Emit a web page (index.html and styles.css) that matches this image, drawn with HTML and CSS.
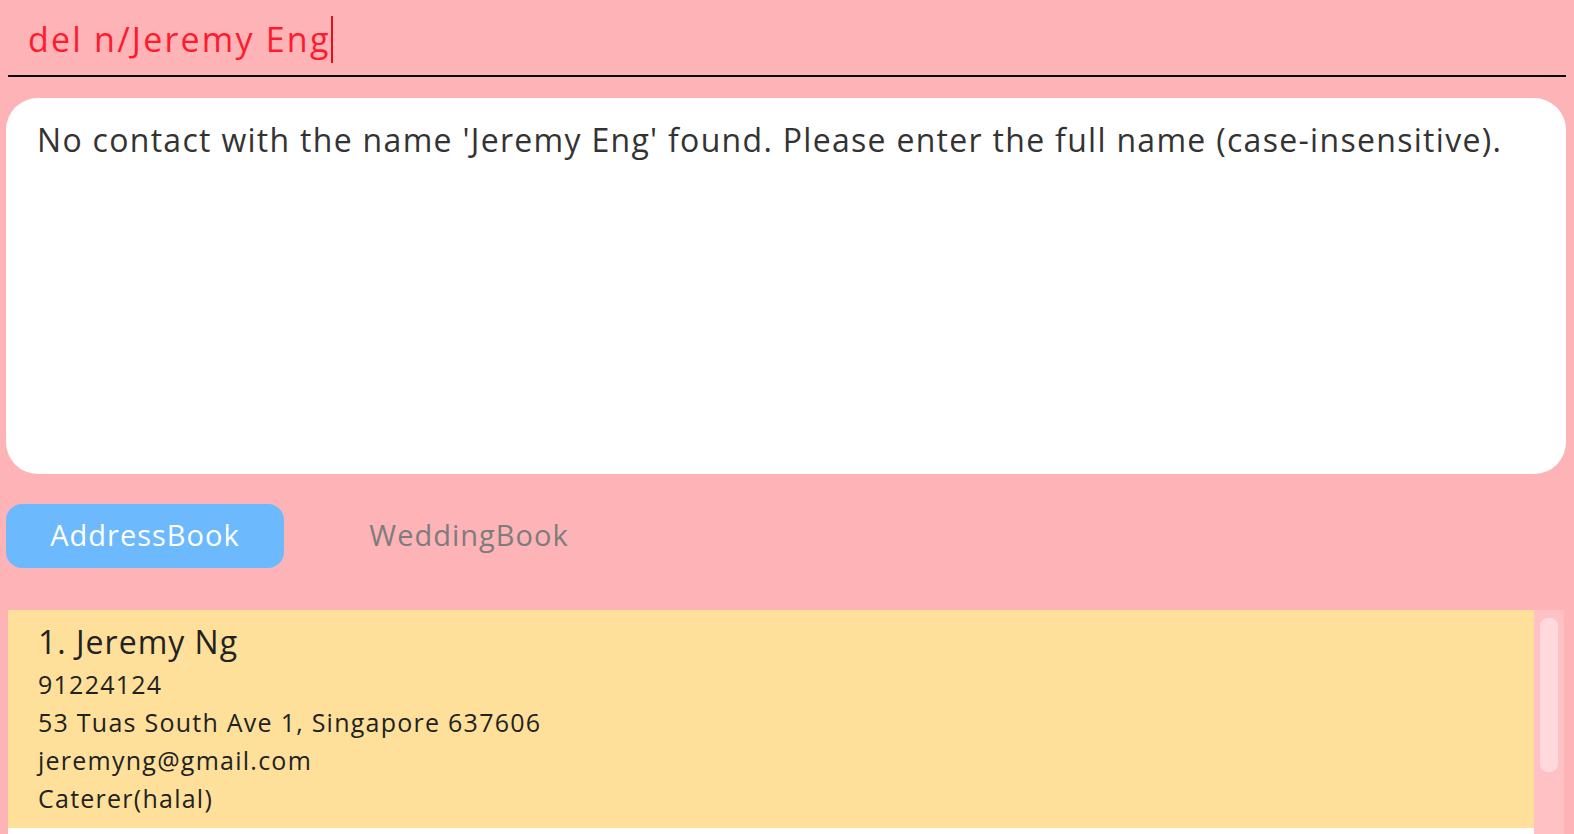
FILE: index.html
```html
<!DOCTYPE html>
<html>
<head>
<meta charset="utf-8">
<link rel="stylesheet" href="styles.css">
</head>
<body>
<div class="app">
  <div class="command">
    <span class="command-text">del n/Jeremy Eng</span><span class="caret"></span>
  </div>
  <div class="result">No contact with the name 'Jeremy Eng' found. Please enter the full name (case-insensitive).</div>
  <div class="tabs">
    <div class="tab tab-active">AddressBook</div>
    <div class="tab">WeddingBook</div>
  </div>
  <div class="list">
    <div class="cards">
      <div class="card">
        <div class="card-name">1. Jeremy Ng</div>
        <div class="card-line">91224124</div>
        <div class="card-line">53 Tuas South Ave 1, Singapore 637606</div>
        <div class="card-line">jeremyng@gmail.com</div>
        <div class="card-line">Caterer(halal)</div>
      </div>
      <div class="card-next"></div>
    </div>
    <div class="scrollbar"><div class="thumb"></div></div>
  </div>
</div>
</body>
</html>
```

FILE: styles.css
```css
html, body {
  margin: 0;
  padding: 0;
  height: 100%;
  overflow: hidden;
}
body {
  background: #feb4b7;
  font-family: "Open Sans", "Noto Sans", sans-serif;
}
.app {
  display: flex;
  flex-direction: column;
  height: 834px;
}
.command {
  margin: 0 8px 0 8px;
  box-sizing: border-box;
  border-bottom: 2px solid #000;
  display: flex;
  align-items: flex-start;
  padding: 17px 0 0 20px;
  height: 77px;
}
.command-text {
  color: #ff1a2e;
  font-size: 34px;
  line-height: 44px;
  letter-spacing: 2.2px;
  margin-right: 0;
}
.caret {
  display: block;
  width: 2px;
  height: 47px;
  margin-top: -1px;
  background: #e0101e;
}
.result {
  margin: 21px 8px 0 6px;
  height: 376px;
  background: #fff;
  border-radius: 32px;
  box-sizing: border-box;
  padding: 20px 31px;
  color: #333;
  font-size: 32px;
  letter-spacing: 1.3px;
}
.tabs {
  display: flex;
  align-items: center;
  margin: 30px 0 0 6px;
  height: 64px;
}
.tab {
  height: 64px;
  width: 278px;
  box-sizing: border-box;
  padding-bottom: 3px;
  display: flex;
  align-items: center;
  justify-content: center;
  font-size: 29px;
  letter-spacing: 1px;
  color: #7d7d7d;
  border-radius: 16px;
  margin-right: 46px;
}
.tab-active {
  background: #6cb9fe;
  color: #fff;
}
.list {
  margin: 42px 10px 0 8px;
  flex: 1;
  display: flex;
  min-height: 0;
}
.cards {
  flex: 1;
  display: flex;
  flex-direction: column;
}
.card {
  background: #fee09b;
  height: 218px;
  box-sizing: border-box;
  padding: 12px 30px;
  color: #222;
}
.card-next {
  flex: 1;
  background: #fff;
}
.card-name {
  font-size: 32px;
  line-height: 40px;
  letter-spacing: 1px;
  margin-bottom: 3px;
}
.card-line {
  font-size: 25px;
  line-height: 38px;
  letter-spacing: 1.25px;
}
.scrollbar {
  width: 30px;
  background: #ffc1c4;
  padding: 8px 6px;
  box-sizing: border-box;
}
.thumb {
  height: 154px;
  background: #ffd9dc;
  border-radius: 8px;
}
```
